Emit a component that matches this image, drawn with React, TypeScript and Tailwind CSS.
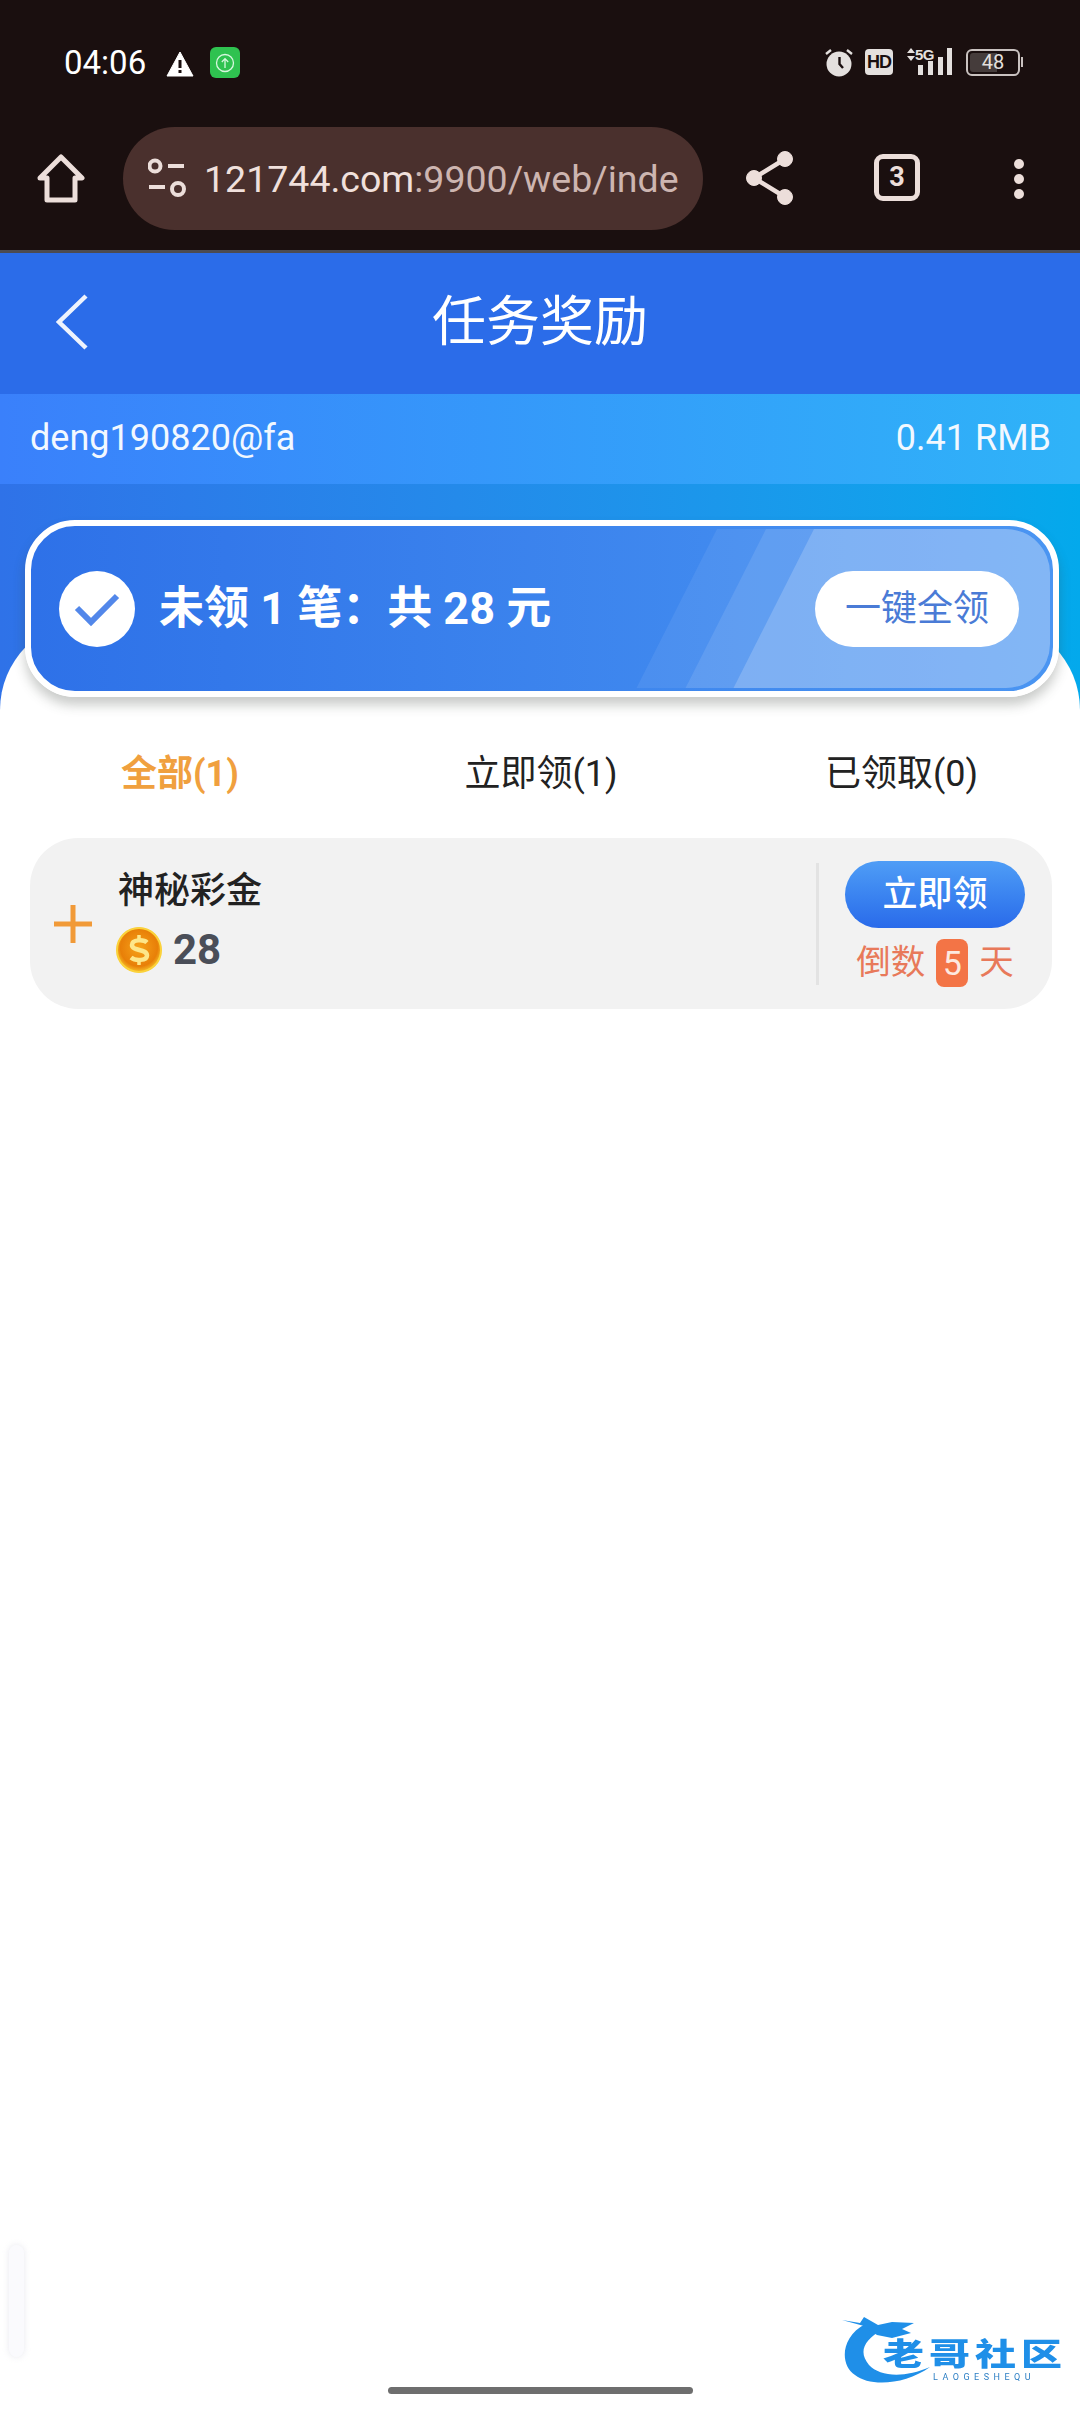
const FONT = "font-['Roboto','Noto_Sans_CJK_SC',sans-serif]"

function StatusBar() {
  return (
    <div className="h-[127px] flex items-start justify-between pl-[64px] pr-[57px] pt-[44px]">
      <div className="flex items-center">
        <span className="text-[33px] leading-[37px] text-white w-[82px]">04:06</span>
        <svg width="28" height="26" viewBox="0 0 28 26" className="ml-[20px] mt-[2px]">
          <path d="M14 1 L27 25 L1 25 Z" fill="#fff" stroke="#fff" strokeLinejoin="round" />
          <rect x="12.5" y="9" width="3" height="8" fill="#1a0f0f" />
          <rect x="12.5" y="19" width="3" height="3" fill="#1a0f0f" />
        </svg>
        <div className="ml-[16px] w-[30px] h-[31px] rounded-[6px] bg-[#2fc250] flex items-center justify-center">
          <svg width="20" height="20" viewBox="0 0 20 20" fill="none" stroke="#d8f7df" strokeWidth="1.3">
            <circle cx="10" cy="10" r="8.5" />
            <path d="M10 15 V6 M6.8 9 L10 5.6 L13.2 9" />
          </svg>
        </div>
      </div>
      <div className="flex items-center text-[#e4e0de] mt-[3px]">
        <svg width="28" height="30" viewBox="0 0 28 30" fill="none">
          <circle cx="14" cy="17" r="12.5" fill="#e4e0de" />
          <path d="M14.5 10 V17 L18 21" stroke="#1a0f0f" strokeWidth="2.4" />
          <path d="M1 7 L6 3 M27 7 L22 3" stroke="#e4e0de" strokeWidth="2.4" />
        </svg>
        <div className="ml-[12px] w-[28px] h-[26px] rounded-[4px] bg-[#e4e0de] flex items-center justify-center text-[#1a0f0f] text-[18px] font-bold leading-none tracking-[-1px] font-['Liberation_Sans',sans-serif]">
          HD
        </div>
        <div className="ml-[10px] w-[50px] h-[30px] relative">
          <svg width="50" height="30" viewBox="0 0 50 30" fill="#e4e0de" className="absolute inset-0">
            <path d="M4 6 L8 1 L12 6 Z M4 9 L12 9 L8 14 Z" />
            <rect x="15" y="18" width="5" height="10" />
            <rect x="25" y="14" width="5" height="14" />
            <rect x="35" y="10" width="5" height="18" />
            <rect x="44" y="1" width="5" height="27" />
          </svg>
          <span className="absolute left-[12px] top-[-1px] text-[15px] leading-[17px] font-bold tracking-[-0.5px] font-['Liberation_Sans',sans-serif]">5G</span>
        </div>
        <div className="ml-[13px] w-[54px] h-[27px] rounded-[6px] border-2 border-[#c9c2c0] p-[2px] flex">
          <div className="w-[27px] bg-[#453c3b] rounded-l-[3px]" />
          <span className="ml-[-27px] w-[46px] text-center text-[20px] leading-[19px] text-[#e4e0de]">48</span>
        </div>
        <div className="ml-[1px] w-[2px] h-[10px] bg-[#c9c2c0]" />
      </div>
    </div>
  )
}

function UrlBar() {
  return (
    <div className="h-[123px] flex items-start">
      <svg width="48" height="50" viewBox="0 0 48 50" fill="none" stroke="#ecdeda" strokeWidth="5" strokeLinejoin="round" className="ml-[37px] mt-[27px] shrink-0">
        <path d="M3 24 L24 3 L45 24 H38 V46 H10 V24 Z" />
      </svg>
      <div className="ml-[38px] w-[580px] h-[103px] rounded-full bg-[#4a302d] flex items-center pl-[25px] pr-[24px] shrink-0">
        <svg width="38" height="42" viewBox="0 0 38 42" fill="none" stroke="#ecdeda" strokeWidth="4" className="shrink-0">
          <circle cx="7" cy="8" r="5.5" />
          <path d="M20 8 H36 M1 29 H17" />
          <circle cx="30" cy="31" r="6" />
        </svg>
        <div className="ml-[18px] overflow-hidden whitespace-nowrap text-[37.5px] leading-[46px] text-[#cdb5b0]">
          <span className="text-[#f0e0dc]">121744.com</span>:9900/web/index.html
        </div>
      </div>
      <svg width="48" height="54" viewBox="0 0 48 54" className="ml-[43px] mt-[24px] shrink-0" fill="#ecdeda" stroke="#ecdeda">
        <path d="M8 27 L39 8 M8 27 L39 46" strokeWidth="4.5" fill="none" />
        <circle cx="8" cy="27" r="7.5" />
        <circle cx="39" cy="8" r="7.5" />
        <circle cx="39" cy="46" r="7.5" />
      </svg>
      <div className="ml-[80px] mt-[27px] w-[46px] h-[47px] rounded-[9px] border-[5px] border-[#ecdeda] flex items-center justify-center text-[#ecdeda] text-[27px] font-bold leading-none shrink-0">
        3
      </div>
      <div className="ml-[94px] mt-[32px] flex flex-col gap-[5px] shrink-0">
        <div className="w-[10px] h-[10px] rounded-full bg-[#ecdeda]" />
        <div className="w-[10px] h-[10px] rounded-full bg-[#ecdeda]" />
        <div className="w-[10px] h-[10px] rounded-full bg-[#ecdeda]" />
      </div>
    </div>
  )
}

function Coin() {
  return (
    <svg width="46" height="46" viewBox="0 0 46 46" className="shrink-0">
      <defs>
        <radialGradient id="coinFill" cx="50%" cy="45%" r="55%">
          <stop offset="0%" stopColor="#f6a21a" />
          <stop offset="75%" stopColor="#e87f08" />
          <stop offset="100%" stopColor="#f8c52c" />
        </radialGradient>
      </defs>
      <circle cx="23" cy="23" r="22.5" fill="url(#coinFill)" />
      <circle cx="23" cy="23" r="22" fill="none" stroke="#fbd23a" strokeWidth="2" />
      <path d="M31 15.5 C28 12.5 16 12 16 18 C16 24.5 31 21.5 31 28.5 C31 34 19 34 15 30.5" fill="none" stroke="#fde68a" strokeWidth="4.5" />
      <path d="M23 8 V12 M23 34 V38" stroke="#fde68a" strokeWidth="3.5" />
    </svg>
  )
}

function SummaryCard() {
  return (
    <div className="relative z-10 ml-[25px] mr-[21px] h-[177px] rounded-[50px] border-[6px] border-white bg-gradient-to-r from-[#2e71e8] to-[#4a95f2] shadow-[0_8px_12px_rgba(60,70,60,0.28)] flex items-center justify-between pl-[28px] pr-[34px]">
      <div className="absolute inset-[3px] rounded-[44px] overflow-hidden">
        <svg width="1022" height="160" viewBox="0 0 1022 160" className="absolute left-0 top-0">
          <polygon points="683,0 1022,0 1022,160 602,160" fill="#fff" fillOpacity="0.07" />
          <polygon points="732,0 1022,0 1022,160 651,160" fill="#fff" fillOpacity="0.1" />
          <polygon points="780,0 1022,0 1022,160 699,160" fill="#fff" fillOpacity="0.19" />
        </svg>
      </div>
      <div className="relative flex items-center">
        <div className="w-[76px] h-[76px] rounded-full bg-white flex items-center justify-center">
          <svg width="46" height="36" viewBox="0 0 46 36" fill="none" stroke="#5287ea" strokeWidth="6">
            <path d="M3 17 L17 31 L43 5" />
          </svg>
        </div>
        <span className="ml-[24px] text-[45px] leading-[50px] font-bold text-white whitespace-nowrap">未领 1 笔：共 28 元</span>
      </div>
      <div className="relative w-[204px] h-[76px] rounded-full bg-white flex items-center justify-center text-[36px] leading-none text-[#4a7bd6]">
        一键全领
      </div>
    </div>
  )
}

function RewardRow() {
  return (
    <div className="ml-[30px] mr-[28px] mt-[41px] h-[171px] rounded-[48px] bg-[#f2f2f2] flex items-center pl-[24px] pr-[27px]">
      <svg width="38" height="38" viewBox="0 0 38 38" stroke="#f19a38" strokeWidth="5" className="shrink-0">
        <path d="M0 19 H38 M19 0 V38" />
      </svg>
      <div className="ml-[26px] flex-1">
        <div className="text-[36px] leading-[44px] font-medium text-[#222] -mt-[5px]">神秘彩金</div>
        <div className="mt-[14px] flex items-center -ml-[2px]">
          <Coin />
          <span className="ml-[11px] text-[42px] leading-[46px] font-bold text-[#4a4e58]">28</span>
        </div>
      </div>
      <div className="w-[3px] h-[122px] bg-[#e3e3e3] mr-[26px]" />
      <div className="w-[180px] flex flex-col items-center">
        <div className="w-[180px] h-[67px] rounded-full bg-gradient-to-b from-[#4f9df6] to-[#2a6aea] flex items-center justify-center text-[35px] leading-none font-medium text-white">
          立即领
        </div>
        <div className="mt-[11px] h-[48px] flex items-center text-[34.5px] leading-none text-[#e8795a] whitespace-nowrap">
          <span>倒数</span>
          <div className="mx-[11px] w-[32px] h-[48px] rounded-[8px] bg-[#f37446] flex items-center justify-center text-[34px] text-[#fde9e0]">5</div>
          <span>天</span>
        </div>
      </div>
    </div>
  )
}

export default function App() {
  return (
    <div className={`relative w-[1080px] h-[2412px] overflow-hidden bg-white ${FONT}`}>
      {/* Browser chrome */}
      <div className="bg-[#1a0f0f] h-[250px]">
        <StatusBar />
        <UrlBar />
      </div>
      <div className="h-[3px] bg-[#4c4b52]" />

      {/* Page header */}
      <div className="h-[141px] bg-[#2b6ce9] relative flex items-center justify-center">
        <svg width="34" height="56" viewBox="0 0 34 56" fill="none" stroke="#eef3fd" strokeWidth="4.5" className="absolute left-[55px] top-[41px]">
          <path d="M31 2 L4 28 L31 54" />
        </svg>
        <span className="text-[54px] leading-[62px] text-white -mt-[2px]">任务奖励</span>
      </div>
      <div className="h-[90px] bg-gradient-to-r from-[#3a80fb] to-[#2fb3f8] flex items-center justify-between pl-[30px] pr-[29px] pb-[2px] text-[36px] leading-[42px] text-[#f2f8ff]">
        <span>deng190820@fa</span>
        <span>0.41 RMB</span>
      </div>

      {/* Summary */}
      <div className="bg-gradient-to-r from-[#2f72e8] to-[#03a9ec] pt-[36px] h-[300px]">
        <SummaryCard />
        <div className="relative h-[200px] -mt-[77px] rounded-t-[90px] bg-white" />
      </div>

      {/* Content */}
      <div className="relative bg-white -mt-[33px]">
        <div className="grid grid-cols-3 px-[12px] text-[36px] leading-[46px] text-[#222] text-center">
          <span className="font-bold text-[#f0a03e] text-left pl-[109px] whitespace-nowrap">全部(1)</span>
          <span className="pl-[2px]">立即领(1)</span>
          <span className="text-right pr-[90px] whitespace-nowrap">已领取(0)</span>
        </div>
        <RewardRow />
      </div>

      {/* Scroll hint on the left edge */}
      <div className="absolute left-[9px] top-[2245px] w-[15px] h-[112px] rounded-full bg-[#fafafd] shadow-[0_0_6px_rgba(180,180,200,0.3)]" />

      {/* Watermark */}
      <div className="absolute left-[780px] top-[2280px] w-[300px] h-[132px] blur-[0.6px]">
        <svg width="300" height="132" viewBox="0 0 300 132" fill="#1f8fe8" className="absolute inset-0">
          <path d="M85 44 C60 58 60 85 75 95 C90 107 125 105 150 87 C125 98 100 97 89 85 C78 72 84 60 102 50 Z" />
          <path d="M62 40 L80 43 L84 37 L98 45 L112 42 L134 43 L122 49 L131 53 L112 58 L97 55 L84 46 Z" />
        </svg>
        <span className="absolute left-[103px] top-[59px] text-[41px] leading-[40px] font-black tracking-[5px] whitespace-nowrap text-[#1f8fe8] scale-y-75 origin-top">老哥社区</span>
        <span className="absolute left-[153px] top-[92px] text-[9px] leading-[10px] tracking-[4.5px] whitespace-nowrap text-[#2d7fc4]">LAOGESHEQU</span>
      </div>

      {/* Gesture bar */}
      <div className="absolute left-[388px] top-[2387px] w-[305px] h-[7px] rounded-full bg-[#6e6e6e]" />
    </div>
  )
}
